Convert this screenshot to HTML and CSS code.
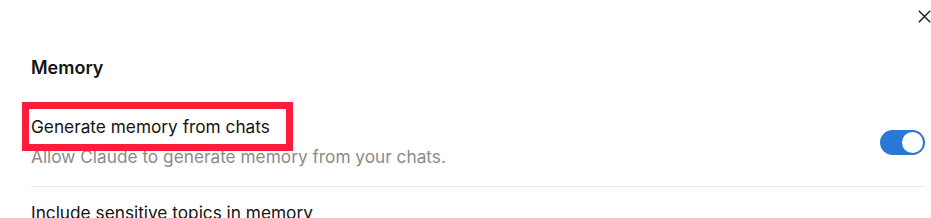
FILE: index.html
```html
<!DOCTYPE html>
<html lang="en">

<head>
    <meta charset="UTF-8">
    <meta name="viewport" content="width=device-width, initial-scale=1.0">
    <title>Memory settings</title>
    <link rel="stylesheet" href="styles.css">
</head>

<body>
    <article class="dialog">
        <header class="dialog-header">
            <button class="close" aria-label="Close">
                <svg width="13" height="13" viewBox="0 0 13 13" fill="none" stroke="#1a1a19" stroke-width="1.4">
                    <path d="M0.8 0.8 L12.2 12.2 M12.2 0.8 L0.8 12.2" />
                </svg>
            </button>
        </header>
        <section class="settings">
            <h2 class="section-title">Memory</h2>
            <div class="setting">
                <div class="setting-text">
                    <span class="setting-title annotated">Generate memory from chats</span>
                    <p class="setting-desc">Allow Claude to generate memory from your chats.</p>
                </div>
                <span class="toggle on" role="switch" aria-checked="true"><span class="knob"></span></span>
            </div>
            <div class="setting">
                <div class="setting-text">
                    <span class="setting-title">Include sensitive topics in memory</span>
                </div>
            </div>
        </section>
    </article>
</body>

</html>
```

FILE: styles.css
```css
body {
    margin: 0;
    background: #ffffff;
    color: #141413;
    font-family: Inter, "Noto Sans", sans-serif;
    -webkit-font-smoothing: antialiased;
}

.dialog {
    padding: 0 6px 0 31px;
}

.dialog-header {
    display: flex;
    justify-content: flex-end;
    margin-right: -6px;
    padding-top: 10px;
}

.close {
    display: flex;
    padding: 0;
    border: 0;
    background: none;
}

.section-title {
    margin: 33px 0 0;
    font-size: 18px;
    font-weight: 600;
    line-height: 24px;
}

.setting {
    display: flex;
    align-items: center;
    justify-content: space-between;
    padding: 35px 0 17px;
    border-bottom: 1px solid #ebebea;
}

.setting + .setting {
    padding-top: 14px;
    border-bottom: 0;
}

.setting-text {
    display: flex;
    flex-direction: column;
}

.setting-title {
    font-size: 17.25px;
    line-height: 24px;
}

.setting-desc {
    margin: 6px 0 0;
    font-size: 17.25px;
    line-height: 24px;
    color: #8c8b87;
}

.annotated {
    position: relative;
    align-self: flex-start;
}

.annotated::after {
    content: "";
    position: absolute;
    left: -9px;
    top: -13px;
    width: 257px;
    height: 35px;
    border: 7px solid #fd1d3b;
}

.toggle {
    display: flex;
    align-items: center;
    justify-content: flex-end;
    width: 45px;
    height: 25px;
    padding: 0 2px;
    box-sizing: border-box;
    border-radius: 13px;
    background: #2a78d6;
}

.knob {
    width: 21px;
    height: 21px;
    border-radius: 50%;
    background: #ffffff;
}
```
